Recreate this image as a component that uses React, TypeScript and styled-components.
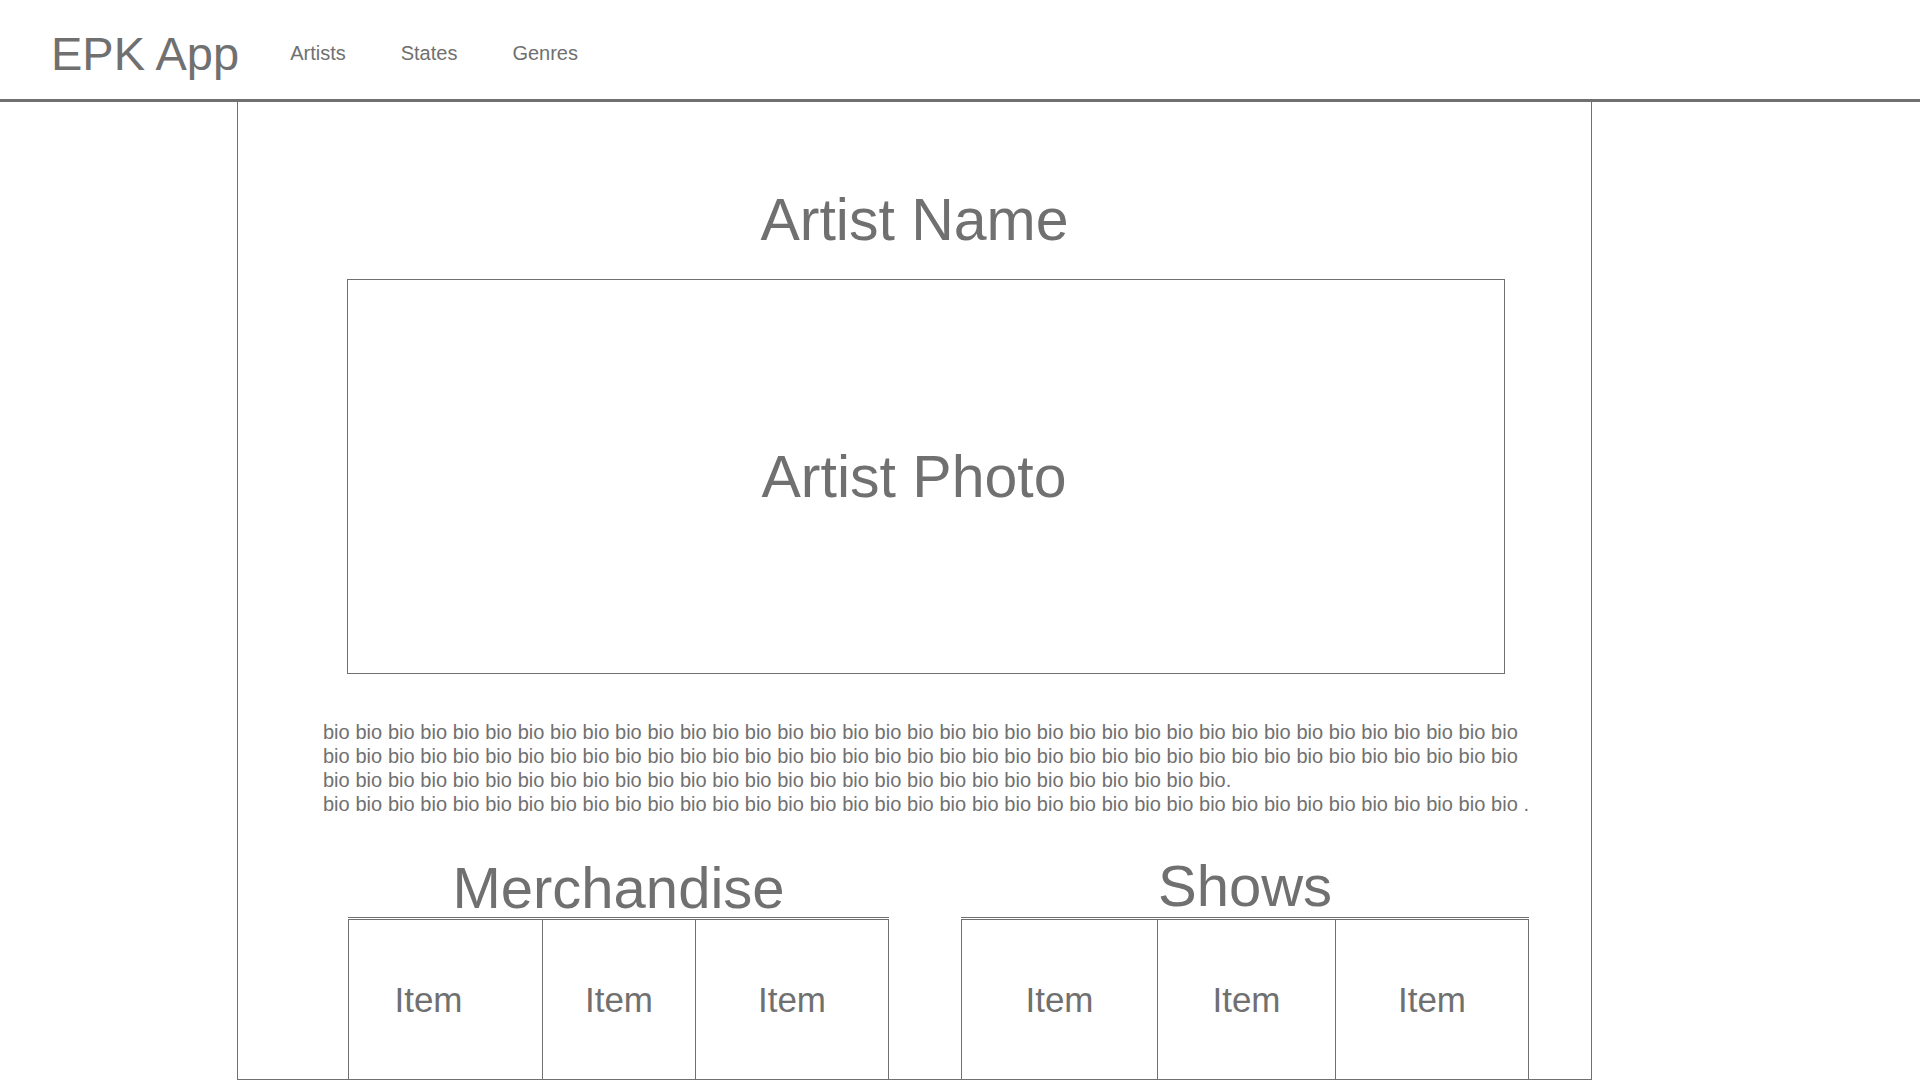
import React from 'react';
import styled, { createGlobalStyle } from 'styled-components';

const GlobalStyle = createGlobalStyle`
  html, body {
    margin: 0;
    padding: 0;
    background: #ffffff;
  }
  body {
    font-family: 'Liberation Sans', Arial, Helvetica, sans-serif;
    color: #707070;
    overflow: hidden;
  }
`;

const Page = styled.div`
  width: 1920px;
  height: 1080px;
  display: flex;
  flex-direction: column;
`;

const Header = styled.header`
  box-sizing: border-box;
  height: 102px;
  padding: 8px 0 0 51px;
  display: flex;
  align-items: center;
  gap: 55px;
  border-bottom: 3px solid #707070;
`;

const Brand = styled.div`
  font-size: 47px;
  margin-right: -4px;
`;

const NavLink = styled.a`
  font-size: 20px;
  color: #707070;
  text-decoration: none;
`;

const Panel = styled.main`
  box-sizing: border-box;
  width: 1355px;
  margin-left: 237px;
  flex: 1;
  border: 1px solid #707070;
  border-top: none;
  padding-top: 84px;
  overflow: hidden;
`;

const Title = styled.h1`
  margin: 0 0 25px;
  font-size: 59px;
  font-weight: normal;
  text-align: center;
`;

const Photo = styled.div`
  box-sizing: border-box;
  width: 1158px;
  height: 395px;
  margin-left: 109px;
  padding-right: 24px;
  border: 1px solid #707070;
  display: flex;
  align-items: center;
  justify-content: center;
  font-size: 59px;
`;

const Bio = styled.p`
  width: 1214px;
  margin: 46px 0 0 85px;
  font-size: 20px;
  line-height: 24px;
  word-spacing: 0.2px;
`;

const Sections = styled.div`
  display: flex;
  gap: 72px;
  margin: 43px 0 0 110px;
`;

const Section = styled.section<{ $w: number }>`
  width: ${p => p.$w}px;
  display: flex;
  flex-direction: column;
`;

const SectionTitle = styled.h2<{ $lift?: number }>`
  margin: 0;
  font-size: 58px;
  line-height: 58px;
  font-weight: normal;
  text-align: center;
  position: relative;
  top: ${p => -(p.$lift || 0)}px;
`;

const ItemRow = styled.div<{ $cols: string }>`
  display: grid;
  grid-template-columns: ${p => p.$cols};
  border-top: 1px solid #707070;
  padding-top: 1px;
`;

const Item = styled.div<{ $shift?: number }>`
  box-sizing: border-box;
  height: 170px;
  padding-bottom: 8px;
  padding-right: ${p => p.$shift || 0}px;
  border: 1px solid #707070;
  border-right: none;
  display: flex;
  align-items: center;
  justify-content: center;
  font-size: 35px;
  &:last-child {
    border-right: 1px solid #707070;
  }
`;

const bios = (n: number) => Array(n).fill('bio').join(' ');

const App = () => {
  const merch = [34, 0, 0];
  const shows = [0, 0, 0];

  return (
    <Page>
      <GlobalStyle />
      <Header>
        <Brand>EPK App</Brand>
        <NavLink href='#'>Artists</NavLink>
        <NavLink href='#'>States</NavLink>
        <NavLink href='#'>Genres</NavLink>
      </Header>
      <Panel>
        <Title>Artist Name</Title>
        <Photo>Artist Photo</Photo>
        <Bio>
          {`${bios(102)}.`}
          <br />
          {`${bios(37)} .`}
        </Bio>
        <Sections>
          <Section $w={541}>
            <SectionTitle>Merchandise</SectionTitle>
            <ItemRow $cols='194px 153px 194px'>
              {merch.map((shift, i) => (
                <Item key={i} $shift={shift}>Item</Item>
              ))}
            </ItemRow>
          </Section>
          <Section $w={568}>
            <SectionTitle $lift={2}>Shows</SectionTitle>
            <ItemRow $cols='196px 178px 194px'>
              {shows.map((shift, i) => (
                <Item key={i} $shift={shift}>Item</Item>
              ))}
            </ItemRow>
          </Section>
        </Sections>
      </Panel>
    </Page>
  );
};

export default App;
